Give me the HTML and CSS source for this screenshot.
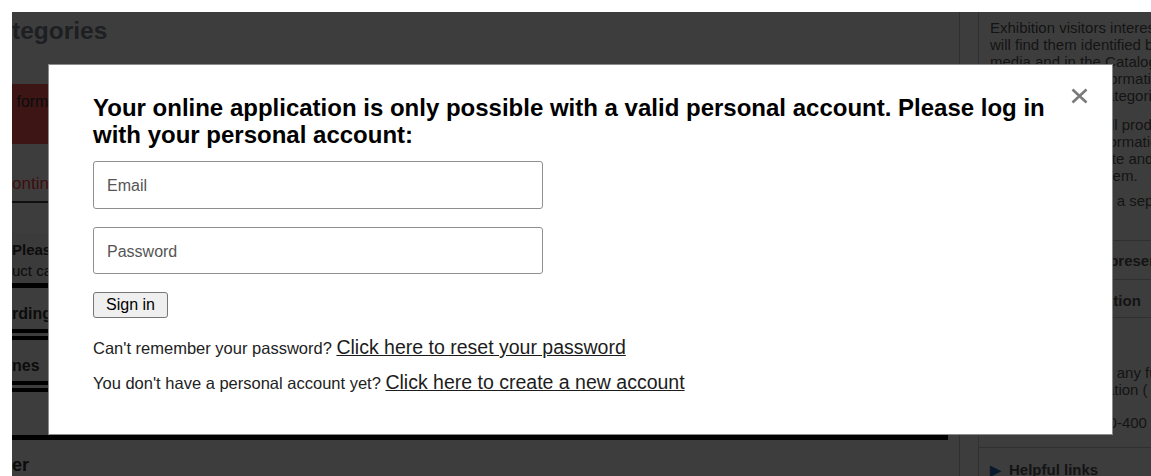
FILE: index.html
```html
<!DOCTYPE html>
<html>
<head>
  <title>Exhibitor application - Login</title>
  <link rel="stylesheet" href="styles.css">
</head>
<body>
  <div class="page">
    <div class="site">
      <div class="main">
        <h1 class="page-title">tegories</h1>
        <div class="alert">&nbsp;form</div>
        <div class="continue">ontin</div>
        <div class="hint">
          <div class="hint-title">Pleas</div>
          <div>uct ca</div>
        </div>
        <div class="section">rding</div>
        <div class="section">nes</div>
        <div class="footer">er</div>
      </div>

      <div class="sidebar">
        <div class="side-panel">
          <div class="side-block">
            <p>Exhibition visitors interested in your products<br>will find them identified by the product<br>media and in the Catalogue of the exhibition.<br>the categories. Information on the<br>of the individual categories</p>
            <p>Please note that all product<br>categories and information<br>are listed on the site and<br>on our search system.</p>
            <p>Exhibitors can use a separate form</p>
          </div>
          <div class="side-row">Your company's presentation</div>
          <div class="side-row">Notes on registration</div>
          <div class="side-block contact">
            <p>Contact<br>Questions?<br>Do contact us with any further<br>queries on registration (</p>
            <p>Tel. +49 711 18560-400</p>
          </div>
          <div class="side-links"><span class="arrow">&#9654;</span>Helpful links</div>
        </div>
      </div>
    </div>

    <div class="overlay"></div>

    <div class="modal">
      <button class="close" type="button" aria-label="Close">
        <svg width="17" height="16" viewBox="0 0 17 16">
          <path d="M1.5 1.5 L15.5 14.5 M15.5 1.5 L1.5 14.5" stroke="#7a7a7a" stroke-width="2.6" fill="none"/>
        </svg>
      </button>
      <h2 class="modal-title">Your online application is only possible with a valid personal account. Please log in with your personal account:</h2>
      <form class="login">
        <input class="field" type="email" placeholder="Email">
        <input class="field" type="password" placeholder="Password">
        <div><button class="submit" type="button">Sign in</button></div>
      </form>
      <p class="help">Can't remember your password? <a href="#">Click here to reset your password</a></p>
      <p class="help second">You don't have a personal account yet? <a href="#">Click here to create a new account</a></p>
    </div>
  </div>
</body>
</html>
```

FILE: styles.css
```css
body { margin: 0; background: #fff; overflow: hidden; font-family: "Liberation Sans", Arial, sans-serif; }
.page { position: relative; margin: 12px 0 0 12px; height: 464px; overflow: hidden; }
.site { display: flex; width: 1400px; height: 464px; background: #fff; }

.main { width: 936px; flex: none; color: #333; }
.page-title { margin: 0; height: 72px; box-sizing: border-box; padding-top: 5px; font-size: 24.5px; line-height: 28px; color: #7a838e; }
.alert { height: 60px; box-sizing: border-box; padding-top: 8px; background: #ff5a5a; color: #333; font-size: 16px; line-height: 20px; }
.continue { height: 59px; box-sizing: border-box; padding-top: 30px; border-bottom: 2px solid #444; color: #ff4040; font-size: 17px; line-height: 20px; }
.hint { margin-top: 30px; height: 55px; box-sizing: border-box; padding-top: 6px; background: #f4f4f4; border-bottom: 5px solid #000; font-size: 15px; line-height: 21px; }
.hint-title { font-weight: bold; }
.section { height: 52px; box-sizing: border-box; padding-top: 16px; border-bottom: 11px double #000; font-size: 16px; line-height: 20px; font-weight: bold; }
.section:first-of-type { height: 53px; padding-top: 17px; }
.footer { margin-top: 43px; padding-top: 15px; border-top: 5px solid #000; font-size: 18px; line-height: 20px; font-weight: bold; }

.sidebar { margin-left: 11px; padding-left: 18px; border-left: 1px solid #c8c8c8; flex: 1; display: flex; }
.side-panel { flex: 1; border-left: 1px solid #c8c8c8; color: #555; font-size: 15px; line-height: 17px; white-space: nowrap; }
.side-block { padding: 7px 11px 31px; border-bottom: 1px solid #c8c8c8; }
.side-block p { margin: 0; }
.side-block p + p { margin-top: 12px; }
.side-block p:last-child { margin-top: 8px; }
.side-row { padding: 11px 11px 10px; border-bottom: 1px solid #c8c8c8; font-weight: bold; }
.side-row + .side-row { padding: 12px 11px 8px; }
.contact { padding: 12px 11px 16px; }
.contact p:last-child { margin-top: 16px; }
.side-links { padding: 13px 11px; font-weight: bold; }
.arrow { margin-right: 8px; color: #2a6ebb; font-size: 14px; }

.overlay { position: absolute; top: 0; left: 0; right: 0; bottom: 0; background: rgba(0, 0, 0, 0.76); }

.modal { position: absolute; left: 36px; top: 52px; width: 1065px; height: 371px; box-sizing: border-box; padding: 29px 44px 0; background: #fff; border: 1px solid #8c8c8c; color: #222; }
.close { position: absolute; top: 23px; right: 24px; padding: 0; border: none; background: none; line-height: 0; cursor: pointer; }
.modal-title { margin: 0 0 13px; width: 975px; font-size: 24px; line-height: 27px; font-weight: bold; color: #000; }

.login { margin: 0; display: flex; flex-direction: column; gap: 18px; }
.field { width: 450px; height: 48px; box-sizing: border-box; padding: 2px 13px 0; border: 1px solid #8f8f8f; border-radius: 3px; font: 16px "Liberation Sans", Arial, sans-serif; color: #222; }
.field:last-of-type { height: 47px; }
.field::placeholder { color: #555; }
.submit { height: 26px; padding: 0 12px; border: 1px solid #767676; border-radius: 3px; background: #efefef; font: 16px "Liberation Sans", Arial, sans-serif; color: #000; }

.help { margin: 16px 0 0; font-size: 16.5px; line-height: 26px; color: #222; }
.help.second { margin-top: 8px; }
.help a { font-size: 19.5px; color: #1c1c1c; }
```
